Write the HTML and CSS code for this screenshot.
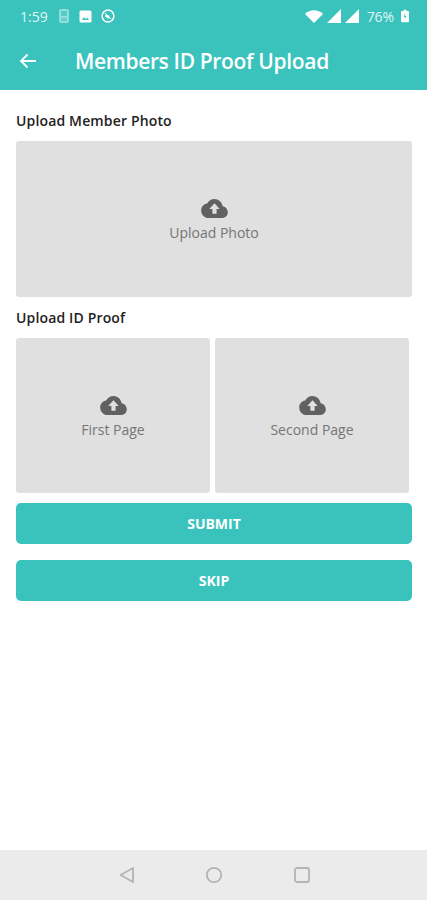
FILE: index.html
```html
<!DOCTYPE html>
<html lang="en">
<head>
  <meta charset="UTF-8">
  <meta name="viewport" content="width=device-width, initial-scale=1.0">
  <title>Members ID Proof Upload</title>
  <link rel="stylesheet" href="styles.css">
</head>
<body>

  <div class="screen">
    <div class="header">
      <div class="status-bar">
        <span class="clock">1:59</span>
        <svg class="status-icon" width="12" height="16" viewBox="0 0 12 16"><rect x="1" y="1" width="10" height="14" rx="2" fill="#fff" opacity="0.45"/><rect x="3" y="3" width="6" height="5" fill="#3ac3bd" opacity="0.7"/><rect x="3" y="10" width="6" height="3" fill="#3ac3bd" opacity="0.5"/></svg>
        <svg class="status-icon" width="13" height="13" viewBox="0 0 13 13"><rect x="0.5" y="0.5" width="12" height="12" rx="1.5" fill="#fff"/><path d="M3 10l2-3 1.500 2 1.500-1.500 2 2.500z" fill="#3ac3bd"/></svg>
        <svg class="status-icon" width="14" height="14" viewBox="0 0 15 15"><circle cx="7.500" cy="7.500" r="6.300" fill="none" stroke="#fff" stroke-width="1.600"/><path d="M4.500 6.500c2.500-1 4.500 0 5 3l-2 1.200c-.5-1.700-1.500-2.500-3-2.200z" fill="#fff"/><path d="M4 4l7 7" stroke="#fff" stroke-width="1"/></svg>
        <div class="status-right">
          <svg class="wifi" width="20" height="15" viewBox="0 0 20 15"><path d="M1 5c5-5 13-5 18 0l-9 9z" fill="#fff"/></svg>
          <svg class="signal" width="14" height="14" viewBox="0 0 15 15"><path d="M15 0v15H0z" fill="#fff"/></svg>
          <svg class="signal signal-last" width="14" height="14" viewBox="0 0 15 15"><path d="M15 0v15H0z" fill="#fff"/></svg>
          <span class="battery-text">76%</span>
          <svg width="8" height="14" viewBox="0 0 9 14"><path d="M3 0h3v1.500h2a1 1 0 0 1 1 1V13a1 1 0 0 1-1 1H1a1 1 0 0 1-1-1V2.500a1 1 0 0 1 1-1h2z" fill="#fff"/><path d="M5 3L3 8h1.500L4 11l2-4H4.500z" fill="#3ac3bd"/></svg>
        </div>
      </div>
      <div class="toolbar">
        <svg class="back-arrow" width="18" height="16" viewBox="0 0 18 16"><path d="M17 8H2M8.500 1.500L2 8l6.500 6.500" fill="none" stroke="#fff" stroke-width="1.800"/></svg>
        <h1>Members ID Proof Upload</h1>
      </div>
    </div>

    <div class="content">
      <h2>Upload Member Photo</h2>
      <div class="upload-box photo-box">
        <svg class="cloud" width="27" height="19" viewBox="0 0 28 20"><path d="M22.600 7.600C21.700 3.200 18.200 0 14 0c-3.400 0-6.300 2-7.700 4.800C2.700 5.300 0 8.300 0 12c0 4.400 3.400 8 7.600 8h14.700c3.200 0 5.700-2.700 5.700-6 0-3.200-2.400-5.800-5.400-6.400z" fill="#616161"/><path d="M14 4.500l5.500 6h-3.300v5h-4.400v-5H8.500z" fill="#e0e0e0"/></svg>
        <span>Upload Photo</span>
      </div>

      <h2>Upload ID Proof</h2>
      <div class="id-row">
        <div class="upload-box id-box">
          <svg class="cloud" width="27" height="19" viewBox="0 0 28 20"><path d="M22.600 7.600C21.700 3.200 18.200 0 14 0c-3.400 0-6.300 2-7.700 4.800C2.700 5.300 0 8.300 0 12c0 4.400 3.400 8 7.600 8h14.700c3.200 0 5.700-2.700 5.700-6 0-3.200-2.400-5.800-5.400-6.400z" fill="#616161"/><path d="M14 4.500l5.500 6h-3.300v5h-4.400v-5H8.500z" fill="#e0e0e0"/></svg>
          <span>First Page</span>
        </div>
        <div class="upload-box id-box">
          <svg class="cloud" width="27" height="19" viewBox="0 0 28 20"><path d="M22.600 7.600C21.700 3.200 18.200 0 14 0c-3.400 0-6.300 2-7.700 4.800C2.700 5.300 0 8.300 0 12c0 4.400 3.400 8 7.600 8h14.700c3.200 0 5.700-2.700 5.700-6 0-3.200-2.400-5.800-5.400-6.400z" fill="#616161"/><path d="M14 4.500l5.500 6h-3.300v5h-4.400v-5H8.500z" fill="#e0e0e0"/></svg>
          <span>Second Page</span>
        </div>
      </div>

      <button type="button" class="action-button submit-button">SUBMIT</button>
      <button type="button" class="action-button">SKIP</button>
    </div>

    <div class="nav-bar">
      <svg class="nav-back" width="18" height="18" viewBox="0 0 18 18"><path d="M15 2v14L2.500 9z" fill="none" stroke="#b4b4b4" stroke-width="1.800" stroke-linejoin="round"/></svg>
      <svg width="18" height="18" viewBox="0 0 18 18"><circle cx="9" cy="9" r="7.200" fill="none" stroke="#b4b4b4" stroke-width="1.800"/></svg>
      <svg width="18" height="18" viewBox="0 0 18 18"><rect x="2" y="2" width="14" height="14" rx="2" fill="none" stroke="#b4b4b4" stroke-width="1.800"/></svg>
    </div>
  </div>

</body>
</html>
```

FILE: styles.css
```css
html, body {
  margin: 0;
  padding: 0;
}
body {
  font-family: "Open Sans", "Noto Sans", sans-serif;
  background-color: #fff;
}
.screen {
  width: 427px;
  height: 900px;
  display: flex;
  flex-direction: column;
  overflow: hidden;
}
.header {
  height: 90px;
  background-color: #3ac3bd;
  color: #fff;
}
.status-bar {
  height: 32px;
  padding: 0 20px;
  display: flex;
  align-items: center;
  gap: 9px;
}
.clock {
  font-size: 14px;
  margin-right: 1px;
  opacity: 0.85;
}
.status-right {
  margin-left: auto;
  margin-right: -2px;
  display: flex;
  align-items: center;
  gap: 3px;
}
.signal {
  margin-left: 0;
}
.signal-last {
  margin-left: 1px;
}
.battery-text {
  font-size: 14px;
  letter-spacing: -0.1px;
  margin: 0 4px 0 5px;
  opacity: 0.85;
}
.toolbar {
  height: 58px;
  padding-left: 19px;
  display: flex;
  align-items: center;
}
.toolbar h1 {
  margin: 0 0 0 38px;
  font-size: 21px;
  font-weight: 600;
  letter-spacing: -0.35px;
  white-space: nowrap;
}
.back-arrow {
  flex-shrink: 0;
}
.content {
  flex: 1;
  padding: 21px 15px 0 16px;
}
h2 {
  margin: 0 0 10px;
  font-size: 14px;
  line-height: 20px;
  font-weight: 600;
  letter-spacing: 0.15px;
  color: #222;
}
.upload-box {
  box-sizing: border-box;
  padding-top: 4px;
  background-color: #e0e0e0;
  border-radius: 3px;
  display: flex;
  flex-direction: column;
  align-items: center;
  justify-content: center;
  color: #757575;
  font-size: 14px;
  line-height: 20px;
}
.cloud {
  margin-bottom: 5px;
}
.photo-box {
  height: 156px;
  margin-bottom: 11px;
}
.id-row {
  display: flex;
  gap: 5px;
  margin-right: 3px;
  margin-bottom: 10px;
}
.id-box {
  flex: 1;
  height: 155px;
}
.action-button {
  display: block;
  width: 100%;
  height: 41px;
  padding: 0;
  border: none;
  border-radius: 5px;
  background-color: #3ac3bd;
  color: #fff;
  font-family: inherit;
  font-size: 14px;
  font-weight: 700;
  cursor: pointer;
}
.submit-button {
  margin-bottom: 16px;
}
.nav-bar {
  height: 50px;
  background-color: #ebebeb;
  display: flex;
  align-items: center;
  justify-content: center;
  gap: 70px;
}
.nav-back {
  margin-left: 1px;
  margin-right: -1px;
}
```
